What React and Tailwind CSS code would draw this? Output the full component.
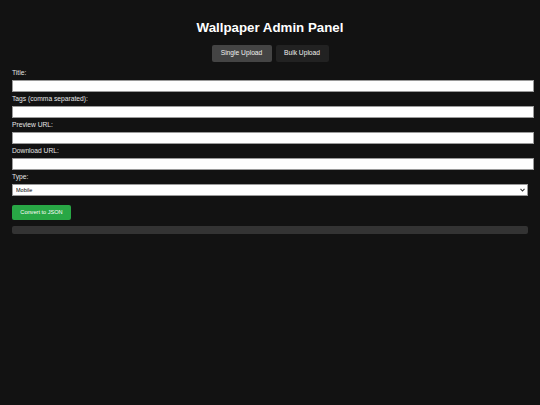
import { useState } from 'react'

const FIELDS = [
  { key: 'title', label: 'Title:' },
  { key: 'tags', label: 'Tags (comma separated):' },
  { key: 'preview', label: 'Preview URL:' },
  { key: 'download', label: 'Download URL:' },
]

export default function App() {
  const [tab, setTab] = useState('single')
  const [form, setForm] = useState({ title: '', tags: '', preview: '', download: '', type: 'Mobile' })

  function update(key, value) {
    setForm(f => ({ ...f, [key]: value }))
  }

  return (
    <div className="min-h-screen bg-[#121212] px-3 pt-[20px] text-white" style={{ fontFamily: '"Liberation Sans", Arial, sans-serif' }}>
      <h1 className="text-center text-[13.3px] font-bold leading-[16px]">Wallpaper Admin Panel</h1>

      <div className="mt-[9px] flex justify-center gap-[4px]">
        <button
          onClick={() => setTab('single')}
          className={`h-[17px] w-[60px] rounded-[2px] text-[6.7px] text-[#f0f0f0] ${tab === 'single' ? 'bg-[#444444]' : 'bg-[#222222]'}`}
        >
          Single Upload
        </button>
        <button
          onClick={() => setTab('bulk')}
          className={`h-[17px] w-[53px] rounded-[2px] text-[6.7px] text-[#f0f0f0] ${tab === 'bulk' ? 'bg-[#444444]' : 'bg-[#222222]'}`}
        >
          Bulk Upload
        </button>
      </div>

      <div className="mt-[7px]">
        {FIELDS.map(f => (
          <div key={f.key} className="mb-[3px]">
            <label className="block text-[6.7px] leading-[8px] text-[#e6e6e6]">{f.label}</label>
            <input
              value={form[f.key]}
              onChange={e => update(f.key, e.target.value)}
              className="mt-[3px] block h-[12px] w-[522px] border border-[#9a9a9a] bg-white px-[2px] text-[6px] text-black outline-none"
            />
          </div>
        ))}

        <label className="block text-[6.7px] leading-[8px] text-[#e6e6e6]">Type:</label>
        <div className="relative mt-[3px] w-[516px]">
          <select
            value={form.type}
            onChange={e => update('type', e.target.value)}
            className="block h-[12px] w-full appearance-none border border-[#9a9a9a] bg-white px-[3px] text-[5.5px] leading-[10px] text-black outline-none"
          >
            <option>Mobile</option>
            <option>Desktop</option>
          </select>
          <svg className="pointer-events-none absolute right-[3px] top-[4px]" width="5" height="4" viewBox="0 0 5 4">
            <path d="M0.5 0.8 L2.5 3 L4.5 0.8" fill="none" stroke="#333" strokeWidth="1.1" />
          </svg>
        </div>

        <button className="mt-[9px] block h-[15px] w-[59px] rounded-[2px] bg-[#28a745] text-[5.6px] text-white">
          Convert to JSON
        </button>

        <div className="mt-[6px] h-[8px] w-[516px] rounded-[2px] bg-[#333333]" />
      </div>
    </div>
  )
}
